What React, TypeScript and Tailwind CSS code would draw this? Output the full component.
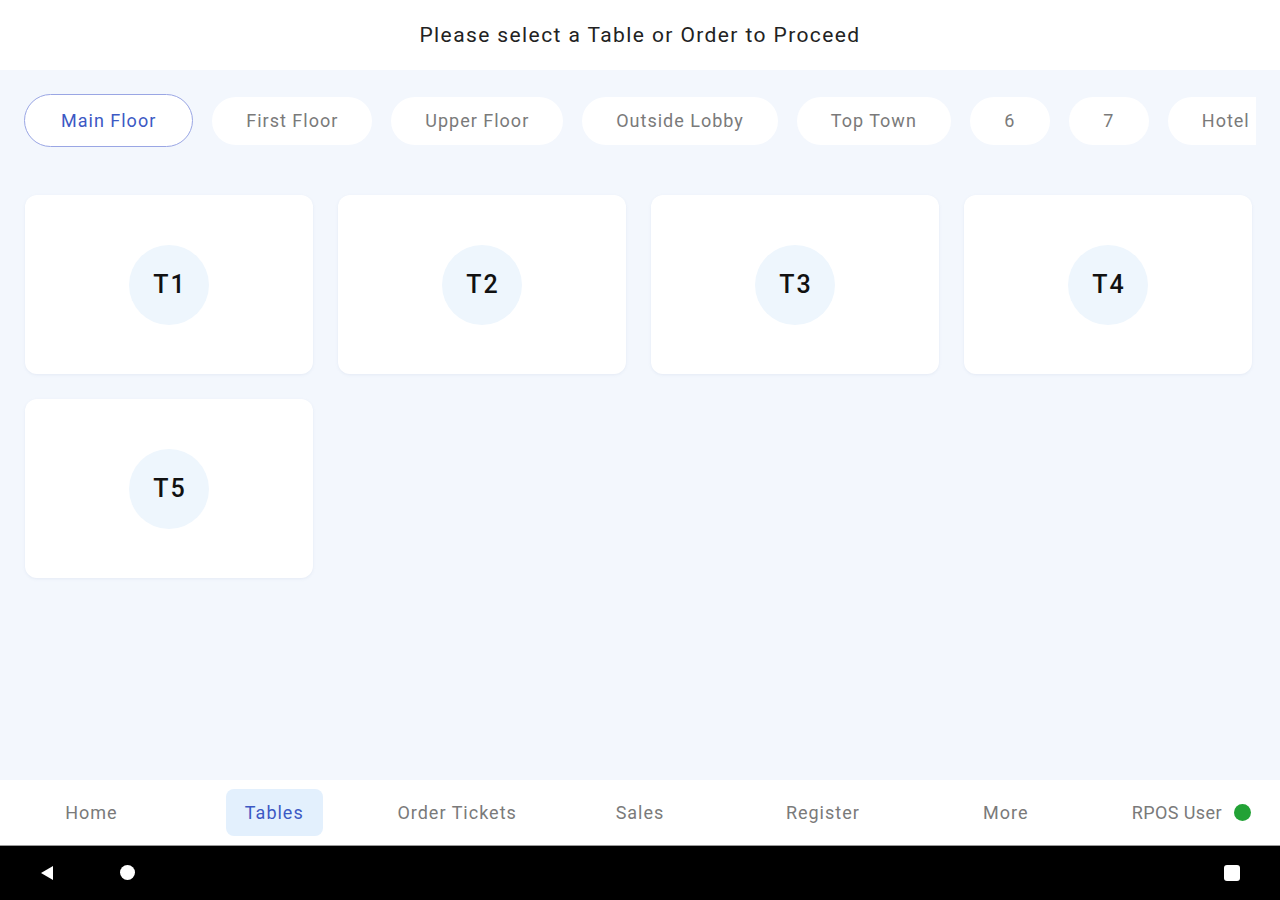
import React from 'react';

const floors = ['Main Floor', 'First Floor', 'Upper Floor', 'Outside Lobby', 'Top Town', '6', '7', 'Hotel'];
const tables = ['T1', 'T2', 'T3', 'T4', 'T5'];
const navItems = ['Home', 'Tables', 'Order Tickets', 'Sales', 'Register', 'More'];

export default function App() {
  return (
    <div className="w-[1280px] h-[900px] flex flex-col bg-[#f3f7fd] font-['Roboto',sans-serif] overflow-hidden">
      {/* Header */}
      <div className="h-[70px] bg-white flex items-center justify-center shrink-0 pt-[2px]">
        <h1 className="text-[21px] tracking-[1.4px] text-[#222]">Please select a Table or Order to Proceed</h1>
      </div>

      {/* Floor chips */}
      <div className="flex pl-6 pr-6 pt-6 shrink-0">
        <div className="flex items-center gap-[19px] overflow-hidden">
          {floors.map((f, i) => (
            <button
              key={f}
              className={
                i === 0
                  ? 'shrink-0 h-[53px] px-9 rounded-full border border-[#9aa6e4] bg-white text-[18px] tracking-[1px] text-[#3c59c4]'
                  : 'shrink-0 h-[48px] min-w-[80px] px-[34px] rounded-full bg-white text-[18px] tracking-[1px] text-[#7a7a7a]'
              }
            >
              {f}
            </button>
          ))}
        </div>
      </div>

      {/* Tables grid */}
      <div className="flex-1 grid grid-cols-4 gap-[25px] pl-[25px] pr-[28px] pt-[48px] content-start">
        {tables.map(t => (
          <div key={t} className="h-[179px] bg-white rounded-xl shadow-[0_1px_3px_rgba(150,170,200,0.15)] flex items-center justify-center">
            <div className="w-[80px] h-[80px] rounded-full bg-[#eef6fd] flex items-center justify-center">
              <span className="text-[25px] font-medium tracking-[2px] pl-[2px] text-[#111]">{t}</span>
            </div>
          </div>
        ))}
      </div>

      {/* Bottom nav */}
      <div className="h-[65px] bg-white grid grid-cols-7 items-center shrink-0">
        {navItems.map(n => (
          <div key={n} className="flex justify-center">
            {n === 'Tables' ? (
              <span className="px-[19px] py-[10px] rounded-lg bg-[#e3f0fd] text-[18px] tracking-[1px] text-[#3c59c4]">{n}</span>
            ) : (
              <span className="text-[18px] tracking-[1px] text-[#7a7a7a]">{n}</span>
            )}
          </div>
        ))}
        <div className="flex items-center justify-end pr-[29px] gap-2">
          <span className="text-[18px] tracking-[0.4px] text-[#7a7a7a]">RPOS User</span>
          <span className="w-[17px] h-[17px] rounded-full bg-[#22a236] ml-1"></span>
        </div>
      </div>

      {/* Android system bar */}
      <div className="h-[55px] bg-black border-t border-[#999] shrink-0 relative">
        <svg className="absolute left-[39px] top-[19px]" width="16" height="16" viewBox="0 0 16 16">
          <polygon points="14,1 14,15 2,8" fill="white" />
        </svg>
        <span className="absolute left-[120px] top-[19px] w-[15px] h-[15px] rounded-full bg-white"></span>
        <span className="absolute left-[1224px] top-[19px] w-[16px] h-[16px] rounded-[3px] bg-white"></span>
      </div>
    </div>
  );
}
